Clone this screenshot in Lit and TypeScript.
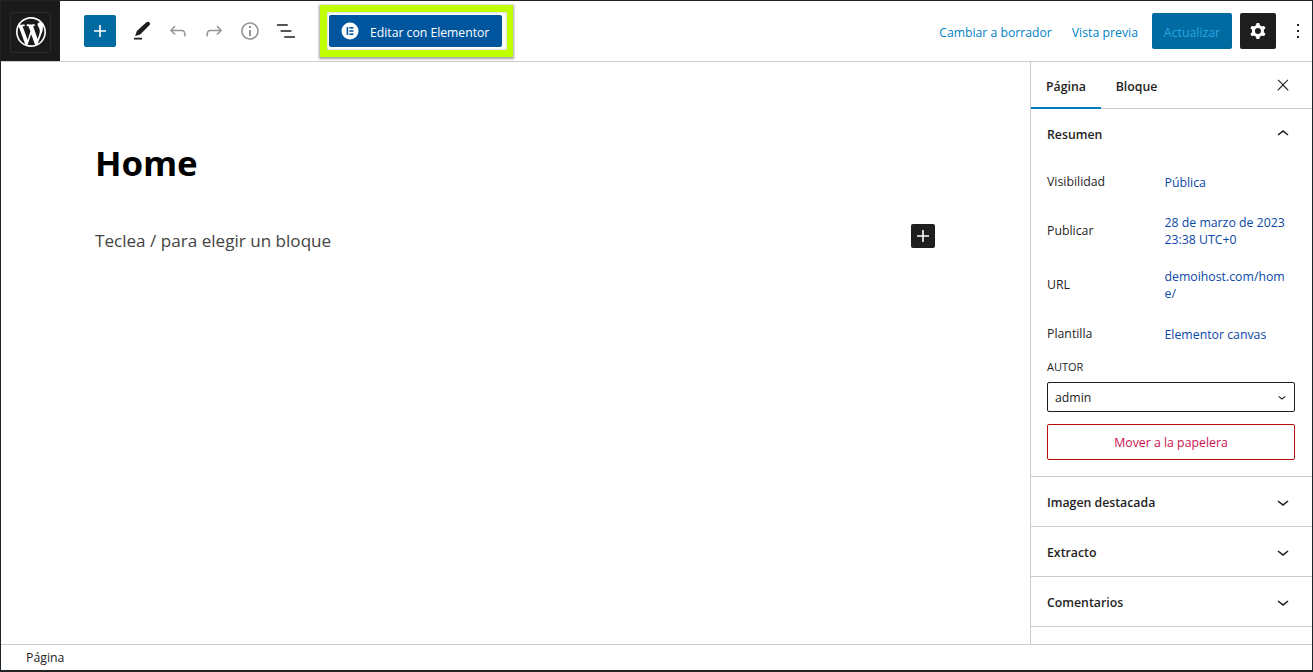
import { LitElement, html, css } from "lit";
import { customElement } from "lit/decorators.js";

const icon = (d: string, cls = "") => html`<svg class="ic ${cls}" viewBox="0 0 24 24" width="24" height="24" aria-hidden="true"><path fill-rule="evenodd" d=${d}></path></svg>`;
const P = {
  plus: "M18 11.2h-5.2V6h-1.6v5.2H6v1.6h5.2V18h1.6v-5.2H18z",
  pen: "M17.4 3.2c.9-.8 2.2-.7 3 .1.8.9.8 2.1 0 3L11.2 15.4 6.2 17l1.6-4.9zM5 18.7h8v1.8H5z",
  undo: "M18.3 11.7c-.6-.6-1.4-.9-2.3-.9H6.7l2.9-3.3-1.1-1-4.5 5L8.5 16l1-1-2.7-2.7H16c.5 0 .9.2 1.3.5 1 1 1 3.4 1 4.5v.3h1.5v-.2c0-1.5 0-4.3-1.5-5.7z",
  redo: "M15.6 6.5l-1.1 1 2.9 3.3H8c-.9 0-1.7.3-2.3.9-1.4 1.5-1.4 4.2-1.4 5.6v.2h1.5v-.3c0-1.1 0-3.5 1-4.5.3-.3.7-.5 1.3-.5h9.2L14.5 15l1.1 1.1 4.6-4.6-4.6-5z",
  info: "M12 3.2c-4.8 0-8.8 3.9-8.8 8.8 0 4.8 3.9 8.8 8.8 8.8 4.8 0 8.8-3.9 8.8-8.8 0-4.8-4-8.8-8.8-8.8zm0 16c-4 0-7.2-3.3-7.2-7.2C4.8 8 8 4.8 12 4.8s7.2 3.3 7.2 7.2c0 4-3.2 7.2-7.2 7.2zM11 17h2v-6h-2v6zm0-8h2V7h-2v2z",
  list: "M13.8 5.2H3v1.5h10.8V5.2zm-3.6 12v1.5H21v-1.5H10.2zm7.2-6H6.6v1.5h10.8v-1.5z",
  cog: "M10.289 4.836A1 1 0 0111.275 4h1.306a1 1 0 01.987.836l.244 1.466c.787.26 1.503.679 2.108 1.218l1.393-.522a1 1 0 011.216.437l.653 1.13a1 1 0 01-.23 1.273l-1.148.944a6.025 6.025 0 010 2.435l1.149.946a1 1 0 01.23 1.272l-.653 1.13a1 1 0 01-1.216.437l-1.394-.522c-.605.54-1.32.958-2.108 1.218l-.244 1.466a1 1 0 01-.987.836h-1.306a1 1 0 01-.986-.836l-.244-1.466a5.995 5.995 0 01-2.108-1.218l-1.394.522a1 1 0 01-1.217-.436l-.653-1.131a1 1 0 01.23-1.272l1.149-.946a6.026 6.026 0 010-2.435l-1.148-.944a1 1 0 01-.23-1.272l.653-1.131a1 1 0 011.217-.437l1.393.522a5.994 5.994 0 012.108-1.218l.244-1.466zM14.929 12a3 3 0 11-6 0 3 3 0 016 0z",
  close: "M13 11.8l6.1-6.3-1-1-6.1 6.2-6.1-6.2-1 1 6.1 6.3-6.5 6.7 1 1 6.5-6.6 6.5 6.6 1-1z",
  more: "M13 19h-2v-2h2v2zm0-6h-2v-2h2v2zm0-6h-2V5h2v2z",
  up: "M6.5 12.4L12 8l5.5 4.4-.9 1.2L12 10l-4.5 3.6-1-1.2z",
  down: "M17.5 11.6L12 16l-5.5-4.4.9-1.2L12 14l4.5-3.6 1 1.2z",
};
const WP = "M20 10c0-5.51-4.5-10-10-10C4.48 0 0 4.49 0 10c0 5.52 4.48 10 10 10 5.5 0 10-4.48 10-10zM7.78 15.37L4.37 6.22c.55-.02 1.17-.08 1.17-.08.5-.06.44-1.13-.06-1.11 0 0-1.45.11-2.37.11-.18 0-.37 0-.58-.01C4.12 2.69 6.87 1.11 10 1.11c2.33 0 4.45.87 6.05 2.34-.68-.11-1.65.39-1.65 1.58 0 .74.45 1.36.9 2.1.35.61.55 1.36.55 2.46 0 1.49-1.4 5-1.4 5l-3.03-8.37c.54-.02.82-.17.82-.17.5-.05.44-1.25-.06-1.22 0 0-1.44.12-2.38.12-.87 0-2.33-.12-2.33-.12-.5-.03-.56 1.2-.06 1.22l.92.08 1.26 3.41zM17.41 10c.24-.64.74-1.87.43-4.25.7 1.29 1.05 2.71 1.05 4.25 0 3.29-1.73 6.24-4.4 7.78.97-2.59 1.94-5.2 2.92-7.78zM6.1 18.09C3.12 16.65 1.11 13.53 1.11 10c0-1.3.23-2.48.72-3.59C3.25 10.3 4.67 14.2 6.1 18.09zm4.03-6.63l2.58 6.98c-.86.29-1.76.45-2.71.45-.79 0-1.57-.11-2.29-.33.81-2.38 1.62-4.74 2.42-7.1z";

@customElement("app-root")
export class AppRoot extends LitElement {
  static styles = css`
    :host { display: block; width: 1313px; height: 672px; font-family: "Open Sans", "Noto Sans", sans-serif; font-size: 12.3px; color: #1e1e1e; }
    * { box-sizing: border-box; }
    .frame { width: 1313px; height: 672px; border: 1px solid #1d2327; border-bottom-width: 2px; display: flex; flex-direction: column; background: #fff; overflow: hidden; }
    .ic { display: block; fill: currentColor; flex: none; }
    header { height: 61px; flex: none; display: flex; align-items: center; border-bottom: 1px solid #ccc; }
    .logo { width: 59px; height: 60px; background: #1a1a1a; display: flex; align-items: center; justify-content: center; flex: none; padding-top: 2px; }
    .logo-in { width: 41px; height: 41px; border: 1px solid #2b2b2b; border-radius: 3px; display: flex; align-items: center; justify-content: center; }
    .logo svg { fill: #fff; display: block; }
    .tools { display: flex; align-items: center; margin-left: 24px; }
    .add { width: 32px; height: 32px; background: #006ba1; color: #fff; border-radius: 2px; display: flex; align-items: center; justify-content: center; margin-right: 13px; }
    .t { margin-right: 12px; }
    .t.wide { margin-right: 13px; }
    .dim { color: #949494; }
    .mark { margin-left: 22px; width: 193px; height: 52px; margin-top: 4px; border: solid #c0ff00; border-width: 7px 6px 7px 7px; box-shadow: 0 1px 2px 1px rgba(90,90,90,.55), inset 0 0 2px rgba(90,90,90,.6); display: flex; align-items: center; padding-left: 2px; align-self: flex-start; }
    .elementor { width: 173px; height: 32px; background: #00569e; color: #fff; border-radius: 2px; display: flex; align-items: center; padding-left: 12px; gap: 11px; font-weight: 500; font-size: 12.2px; white-space: nowrap; }
    .elementor svg { display: block; flex: none; }
    .elementor span { padding-top: 2px; }
    .right { margin-left: auto; display: flex; align-items: center; }
    .link { color: #0083c7; white-space: nowrap; padding-top: 2px; }
    .link.a { margin-right: 20px; font-size: 12.2px; }
    .link.b { margin-right: 14px; }
    .update { width: 80px; height: 36px; background: #006ba1; color: #2aa5e0; border-radius: 2px; display: flex; align-items: center; justify-content: center; margin-right: 8px; padding-top: 2px; }
    .gear { width: 36px; height: 36px; background: #1e1e1e; color: #fff; border-radius: 2px; display: flex; align-items: center; justify-content: center; margin-right: 10px; }
    .kebab { margin-right: 2px; }
    main { flex: 1; min-height: 0; display: flex; }
    .editor { flex: 1; min-width: 0; padding: 78px 95px 0 94px; }
    h1 { margin: 0; font-size: 34.7px; line-height: 46px; font-weight: 700; color: #000; font-family: "Noto Sans", sans-serif; }
    .ph-row { margin-top: 39px; display: flex; align-items: flex-start; justify-content: space-between; }
    .ph { font-size: 17.1px; line-height: 28px; color: #444; padding-top: 2px; }
    .blk { width: 24px; height: 24px; background: #1e1e1e; color: #fff; border-radius: 2px; margin-top: -1px; display: flex; align-items: center; justify-content: center; }
    aside { width: 282px; flex: none; border-left: 1px solid #ccc; display: flex; flex-direction: column; }
    .tabs { height: 47px; flex: none; border-bottom: 1px solid #ccc; display: flex; align-items: stretch; font-weight: 600; }
    .tab { width: 70px; display: flex; align-items: center; justify-content: center; margin-bottom: -1px; border-bottom: 2px solid transparent; padding-top: 4px; }
    .tab.on { border-bottom-color: #007cba; }
    .tab.second { width: 71px; }
    .x { margin-left: auto; margin-right: 20px; align-self: center; }
    .x svg { width: 18px; height: 18px; }
    .sec { border-bottom: 1px solid #ccc; flex: none; }
    .sech { height: 49px; display: flex; align-items: center; justify-content: space-between; padding: 0 17px 0 16px; font-weight: 600; }
    .sech span { padding-top: 2px; }
    .sum { height: 368px; }
    .sum .sech { height: 50px; margin-bottom: 6px; }
    .sum .sech span { padding-top: 0; }
    .row { display: grid; grid-template-columns: 117.5px 1fr; padding: 0 16px; align-items: center; min-height: 34px; }
    .lab.up1 { margin-top: -2px; }
    .val { color: #0a47a6; line-height: 17px; word-break: break-all; padding-right: 8px; }
    .val.two { padding-top: 1px; }
    .r2 { margin-top: 14px; } .r3 { margin-top: 19px; } .r4 { margin-top: 15px; }
    .field { padding: 9px 17px 0 16px; }
    .autor { font-size: 11px; line-height: 14px; font-weight: 500; text-transform: uppercase; }
    .select { margin-top: 8px; height: 30px; border: 1px solid #1e1e1e; border-radius: 2px; display: flex; align-items: center; justify-content: space-between; padding: 0 4px 0 7px; }
    .select svg { width: 16px; height: 16px; }
    .trash { margin-top: 12px; height: 36px; border: 1px solid #b80c0c; border-radius: 2px; display: flex; align-items: center; justify-content: center; color: #cc1250; }
    footer { height: 26px; flex: none; border-top: 1px solid #ccc; display: flex; align-items: center; padding-left: 25px; }
  `;
  render() {
    return html`<div class="frame">
      <header>
        <div class="logo"><div class="logo-in"><svg viewBox="0 0 20 20" width="30" height="30" aria-hidden="true"><path d=${WP}></path></svg></div></div>
        <div class="tools">
          <div class="add">${icon(P.plus)}</div>
          <div class="t wide">${icon(P.pen)}</div>
          <div class="t dim">${icon(P.undo)}</div>
          <div class="t dim">${icon(P.redo)}</div>
          <div class="t dim">${icon(P.info)}</div>
          <div>${icon(P.list)}</div>
        </div>
        <div class="mark">
          <div class="elementor">
            <svg viewBox="0 0 18 18" width="18" height="18" aria-hidden="true"><circle cx="9" cy="9" r="8.5" fill="#fff"></circle><rect x="5.6" y="5" width="1.6" height="8" fill="#00569e"></rect><rect x="8.4" y="5" width="4" height="1.6" fill="#00569e"></rect><rect x="8.4" y="8.2" width="4" height="1.6" fill="#00569e"></rect><rect x="8.4" y="11.4" width="4" height="1.6" fill="#00569e"></rect></svg>
            <span>Editar con Elementor</span>
          </div>
        </div>
        <div class="right">
          <span class="link a">Cambiar a borrador</span>
          <span class="link b">Vista previa</span>
          <div class="update">Actualizar</div>
          <div class="gear">${icon(P.cog)}</div>
          <div class="kebab">${icon(P.more)}</div>
        </div>
      </header>
      <main>
        <div class="editor">
          <h1>Home</h1>
          <div class="ph-row">
            <div class="ph">Teclea / para elegir un bloque</div>
            <div class="blk">${icon(P.plus)}</div>
          </div>
        </div>
        <aside>
          <div class="tabs">
            <div class="tab on">Página</div>
            <div class="tab second">Bloque</div>
            <div class="x">${icon(P.close)}</div>
          </div>
          <div class="sec sum">
            <div class="sech"><span>Resumen</span> ${icon(P.up)}</div>
            <div class="row"><span class="lab up1">Visibilidad</span><span class="val">Pública</span></div>
            <div class="row r2"><span class="lab">Publicar</span><span class="val two">28 de marzo de 2023<br />23:38 UTC+0</span></div>
            <div class="row r3"><span class="lab">URL</span><span class="val two">demoihost.com/home/</span></div>
            <div class="row r4"><span class="lab up1">Plantilla</span><span class="val">Elementor canvas</span></div>
            <div class="field">
              <div class="autor">Autor</div>
              <div class="select">admin ${icon(P.down)}</div>
              <div class="trash">Mover a la papelera</div>
            </div>
          </div>
          <div class="sec"><div class="sech"><span>Imagen destacada</span> ${icon(P.down)}</div></div>
          <div class="sec"><div class="sech"><span>Extracto</span> ${icon(P.down)}</div></div>
          <div class="sec"><div class="sech"><span>Comentarios</span> ${icon(P.down)}</div></div>
        </aside>
      </main>
      <footer>Página</footer>
    </div>`;
  }
}
